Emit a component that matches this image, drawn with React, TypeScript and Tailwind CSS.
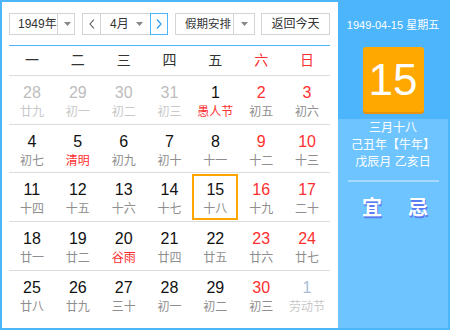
import React from "react";

const FONT = { fontFamily: '"Liberation Sans", Arial, "Noto Sans CJK SC", sans-serif' };

const Tri = () => (
  <svg width="7" height="4" viewBox="0 0 7 4">
    <path d="M0 0h7L3.5 4z" fill="#888" />
  </svg>
);

type Cell = { n: number; l: string; nc: string; lc: string; sel?: boolean };

const BLACK = "text-[#111]";
const RED = "text-[#ff2f2f]";
const GRAY = "text-[#8e8e8e]";
const FADE = "text-[#bdbdbd]";
const FADEL = "text-[#c8c8c8]";

const c = (n: number, l: string, nc = BLACK, lc = GRAY, sel = false): Cell => ({ n, l, nc, lc, sel });

const rows: Cell[][] = [
  [c(28, "廿九", FADE, FADEL), c(29, "初一", FADE, FADEL), c(30, "初二", FADE, FADEL), c(31, "初三", FADE, FADEL), c(1, "愚人节", BLACK, RED), c(2, "初五", RED), c(3, "初六", RED)],
  [c(4, "初七"), c(5, "清明", BLACK, RED), c(6, "初九"), c(7, "初十"), c(8, "十一"), c(9, "十二", RED), c(10, "十三", RED)],
  [c(11, "十四"), c(12, "十五"), c(13, "十六"), c(14, "十七"), c(15, "十八", BLACK, GRAY, true), c(16, "十九", RED), c(17, "二十", RED)],
  [c(18, "廿一"), c(19, "廿二"), c(20, "谷雨", BLACK, RED), c(21, "廿四"), c(22, "廿五"), c(23, "廿六", RED), c(24, "廿七", RED)],
  [c(25, "廿八"), c(26, "廿九"), c(27, "三十"), c(28, "初一"), c(29, "初二"), c(30, "初三", RED), c(1, "劳动节", "text-[#abbdd6]", FADEL)],
];

const rowH = ["h-[49px]", "h-[48px]", "h-[49px]", "h-[49px]", "h-[49px]"];

export default function App() {
  return (
    <div style={FONT} className="w-[450px] h-[330px] border-2 border-[#4db5fc] flex bg-white">
      <div className="w-[336px] pl-[7px] pr-[8px] pt-[11px] flex flex-col">
        <div className="flex items-center h-[22px] text-[12px] text-[#333] whitespace-nowrap">
          <div className="w-[66px] h-[22px] border border-[#d4d4d4] flex">
            <span className="flex-1 pl-[8px] leading-[20px]">1949年</span>
            <span className="w-[20px] shrink-0 border-l border-[#d4d4d4] flex items-center justify-center">
              <Tri />
            </span>
          </div>
          <div className="ml-[7px] flex h-[22px]">
            <div className="w-[19px] border border-[#d4d4d4] flex items-center justify-center">
              <svg width="6" height="10" viewBox="0 0 6 10">
                <path d="M5 0.5L1 5l4 4.5" fill="none" stroke="#555" strokeWidth="1.1" />
              </svg>
            </div>
            <div className="w-[49px] border-y border-[#d4d4d4] flex items-center">
              <span className="flex-1 pl-[9px] leading-[20px]">4月</span>
              <span className="pr-[7px] flex items-center">
                <Tri />
              </span>
            </div>
            <div className="w-[18px] border border-[#4db5fc] flex items-center justify-center">
              <svg width="6" height="10" viewBox="0 0 6 10">
                <path d="M1 0.5L5 5l-4 4.5" fill="none" stroke="#2e9cf0" strokeWidth="1.2" />
              </svg>
            </div>
          </div>
          <div className="ml-[7px] w-[80px] h-[22px] border border-[#d4d4d4] flex">
            <span className="flex-1 pl-[9px] leading-[20px] text-[11.5px]">假期安排</span>
            <span className="w-[21px] shrink-0 border-l border-[#d4d4d4] flex items-center justify-center">
              <Tri />
            </span>
          </div>
          <div className="ml-[6px] w-[69px] h-[22px] border border-[#d4d4d4] flex items-center justify-center leading-[20px]">
            返回今天
          </div>
        </div>
        <div className="mt-[10px] h-px bg-[#4db5fc]" />
        <div className="grid grid-cols-7 h-[29px] items-center text-[14px] text-[#333] text-center">
          {["一", "二", "三", "四", "五"].map((d) => (
            <span key={d}>{d}</span>
          ))}
          <span className="text-[#ff2f2f]">六</span>
          <span className="text-[#ff2f2f]">日</span>
        </div>
        {rows.map((r, i) => (
          <div key={i} className={`grid grid-cols-7 border-t border-[#dcdcdc] ${rowH[i]}`}>
            {r.map((cell, j) => (
              <div
                key={j}
                className={
                  cell.sel
                    ? "flex flex-col items-center pt-[5px] border-2 border-[#ffa500] my-[1px]"
                    : "flex flex-col items-center pt-[8px]"
                }
              >
                <span className={`text-[16px] leading-[18px] ${cell.nc}`}>{cell.n}</span>
                <span className={`text-[12px] leading-[14px] mt-[3px] ${cell.lc}`}>{cell.l}</span>
              </div>
            ))}
          </div>
        ))}
      </div>
      <div className="flex-1 flex flex-col bg-[#6ec4ff] text-white">
        <div className="h-[117px] bg-[#4db5fc] flex flex-col items-center pt-[15px]">
          <div className="text-[11px] leading-[16px] whitespace-nowrap">1949-04-15 星期五</div>
          <div className="mt-[14px] w-[61px] h-[65px] bg-[#ffa800] rounded-[3px] shadow-[0_2px_0_#e8940a] flex items-center justify-center text-[44px] leading-none">
            15
          </div>
        </div>
        <div className="pt-[1px] flex flex-col items-center text-[12px] leading-[17px]">
          <div>三月十八</div>
          <div>己丑年【牛年】</div>
          <div>戊辰月 乙亥日</div>
        </div>
        <div className="mt-[9px] mx-auto w-[91px] h-[2px] bg-[#a6d9ff]" />
        <div className="mt-[14px] flex justify-center gap-[26px] pl-[4px] text-[20px] leading-[24px] font-semibold [text-shadow:1px_2px_0_#5a7cf2]">
          <span>宜</span>
          <span>忌</span>
        </div>
      </div>
    </div>
  );
}
